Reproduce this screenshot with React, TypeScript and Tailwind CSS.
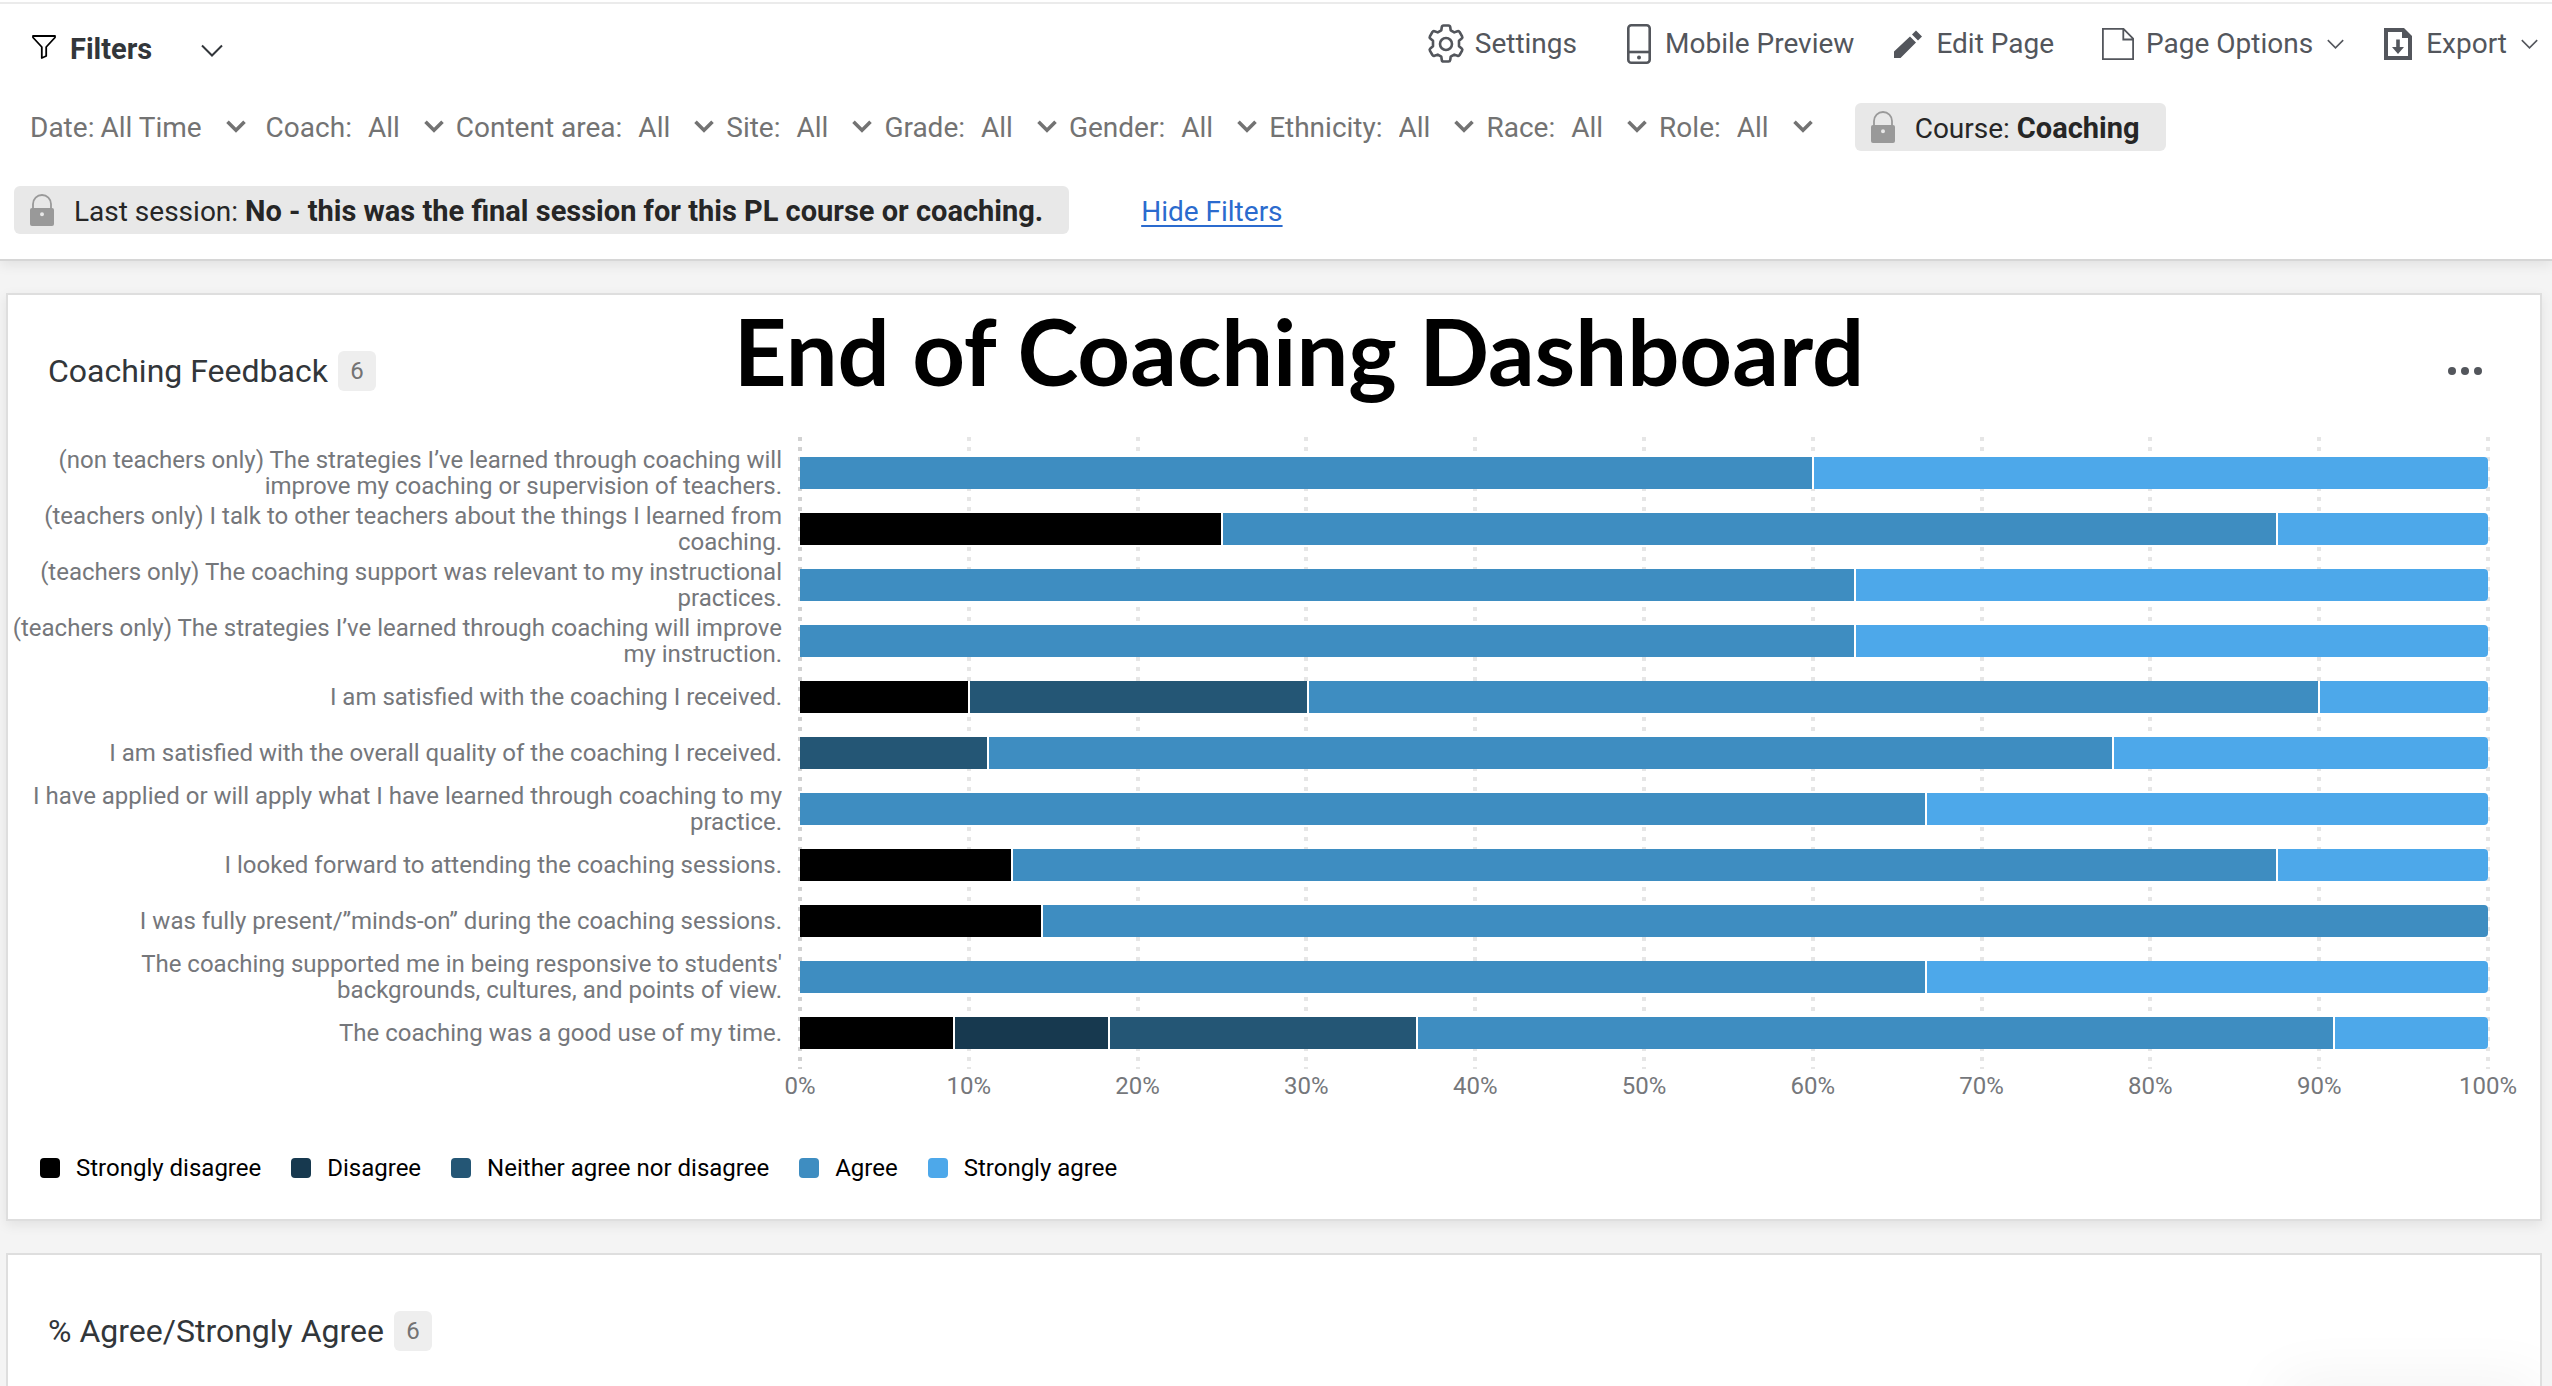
import type { ReactNode } from "react";

const LEVELS = [
  { name: "Strongly disagree", color: "bg-black" },
  { name: "Disagree", color: "bg-[#17394f]" },
  { name: "Neither agree nor disagree", color: "bg-[#245675]" },
  { name: "Agree", color: "bg-[#3e8dc1]" },
  { name: "Strongly agree", color: "bg-[#4da8ea]" },
];

// Shares per row, in the order of LEVELS.
const ROWS: { label: string; values: number[] }[] = [
  {
    label: "(non teachers only) The strategies I’ve learned through coaching will\nimprove my coaching or supervision of teachers.",
    values: [0, 0, 0, 60, 40],
  },
  {
    label: "(teachers only) I talk to other teachers about the things I learned from\ncoaching.",
    values: [25, 0, 0, 62.5, 12.5],
  },
  {
    label: "(teachers only) The coaching support was relevant to my instructional\npractices.",
    values: [0, 0, 0, 62.5, 37.5],
  },
  {
    label: "(teachers only) The strategies I’ve learned through coaching will improve\nmy instruction.",
    values: [0, 0, 0, 62.5, 37.5],
  },
  { label: "I am satisfied with the coaching I received.", values: [10, 0, 20, 60, 10] },
  {
    label: "I am satisfied with the overall quality of the coaching I received.",
    values: [0, 0, 11.1, 66.7, 22.2],
  },
  {
    label: "I have applied or will apply what I have learned through coaching to my\npractice.",
    values: [0, 0, 0, 66.7, 33.3],
  },
  { label: "I looked forward to attending the coaching sessions.", values: [12.5, 0, 0, 75, 12.5] },
  { label: "I was fully present/”minds-on” during the coaching sessions.", values: [14.3, 0, 0, 85.7, 0] },
  {
    label: "The coaching supported me in being responsive to students'\nbackgrounds, cultures, and points of view.",
    values: [0, 0, 0, 66.7, 33.3],
  },
  { label: "The coaching was a good use of my time.", values: [9.1, 9.1, 18.2, 54.5, 9.1] },
];

const TICKS = [0, 10, 20, 30, 40, 50, 60, 70, 80, 90, 100];

const FILTERS = ["Coach", "Content area", "Site", "Grade", "Gender", "Ethnicity", "Race", "Role"];

function ThinChevron({ className }: { className: string }) {
  return (
    <svg viewBox="0 0 22 13" fill="none" stroke="currentColor" strokeWidth="2" className={className} aria-hidden="true">
      <path d="M1 1.5 11 11.5 21 1.5" />
    </svg>
  );
}

function LockIcon() {
  return (
    <svg viewBox="0 0 24 32" className="h-8 w-6 shrink-0" aria-hidden="true">
      <path d="M3 15v-5a9 9 0 0 1 18 0v5" fill="none" stroke="#999" strokeWidth="1.8" />
      <path
        fillRule="evenodd"
        fill="#999"
        d="M2 14h20a2 2 0 0 1 2 2v14a2 2 0 0 1-2 2H2a2 2 0 0 1-2-2V16a2 2 0 0 1 2-2Zm10 4.200a2 2 0 1 0 0 4 2 2 0 0 0 0-4Z"
      />
    </svg>
  );
}

function FilterSelect({ label, value, className = "", gap = "gap-4" }: { label: string; value: string; className?: string; gap?: string }) {
  const id = "filter-" + label.toLowerCase().replace(" ", "-");
  return (
    <div className={`flex items-center pt-[2px] text-[28px] leading-8 text-[#737373] ${gap} ${className}`}>
      <label htmlFor={id}>{label}:</label>
      <div className="relative flex items-center">
        <select id={id} defaultValue={value} className="field-sizing-content appearance-none bg-transparent pr-11 leading-8">
          <option>{value}</option>
        </select>
        <svg
          viewBox="0 0 20 14"
          fill="none"
          stroke="currentColor"
          strokeWidth="3.6"
          className="pointer-events-none absolute right-0 bottom-[10px] h-[14px] w-5"
          aria-hidden="true"
        >
          <path d="M1.500 1.800 10 10.300l8.500-8.500" />
        </svg>
      </div>
    </div>
  );
}

function LockedFilter({ label, value, className = "" }: { label: string; value: string; className?: string }) {
  return (
    <div className={`flex h-12 items-center gap-5 rounded-md bg-[#e8e8e8] pr-[26px] pl-4 text-[28px] leading-8 text-[#262626] ${className}`}>
      <LockIcon />
      <span className="pt-[3px] whitespace-nowrap">
        {label}: <b className="text-[29px] font-bold">{value}</b>
      </span>
    </div>
  );
}

function ToolButton({ icon, children, className = "", menu = false }: { icon: ReactNode; children: ReactNode; className?: string; menu?: boolean }) {
  return (
    <button type="button" className={`flex items-center text-[28px] leading-8 whitespace-nowrap text-[#53565c] ${className}`}>
      {icon}
      {children}
      {menu && <ThinChevron className="ml-[14px] h-[10px] w-[17px]" />}
    </button>
  );
}

function CardTitle({ title, count }: { title: string; count: number }) {
  return (
    <div className="flex items-center gap-[10px]">
      <h2 className="text-[32px] leading-10 text-[#32363a]">{title}</h2>
      <span className="flex h-10 w-[38px] items-center justify-center rounded-md bg-[#eee] text-2xl text-[#737373]">{count}</span>
    </div>
  );
}

function Bar({ values }: { values: number[] }) {
  const segments = values.map((value, i) => ({ value, color: LEVELS[i].color })).filter((s) => s.value > 0);
  return (
    <div className="flex h-8 w-full gap-[2px] overflow-hidden rounded-r-[4px] bg-white">
      {segments.map((s) => (
        <div key={s.color} className={`h-full basis-0 ${s.color}`} style={{ flexGrow: s.value }} />
      ))}
    </div>
  );
}

function Chart() {
  return (
    <div className="flex pr-[52px]">
      <div className="flex w-[774px] shrink-0 flex-col pt-2">
        {ROWS.map((row) => (
          <div key={row.label} className="flex h-14 items-center justify-end text-right text-2xl leading-[26px] whitespace-pre text-[#75777b]">
            {row.label}
          </div>
        ))}
      </div>
      <div className="ml-[18px] min-w-0 flex-1">
        <div className="relative py-2">
          {/* Dotted grid lines behind the bars */}
          <div className="absolute inset-0 -mx-[2px] flex justify-between">
            {TICKS.map((t) => (
              <div
                key={t}
                className={
                  t === 0
                    ? "w-1 bg-[repeating-linear-gradient(to_bottom,#d2d2d2_0_4px,transparent_4px_10px)]"
                    : "w-1 bg-[repeating-linear-gradient(to_bottom,#e6e6e6_0_4px,transparent_4px_10px)]"
                }
              />
            ))}
          </div>
          <div className="relative flex flex-col">
            {ROWS.map((row) => (
              <div key={row.label} className="flex h-14 items-center">
                <Bar values={row.values} />
              </div>
            ))}
          </div>
        </div>
        <div className="flex justify-between text-2xl leading-[34px] text-[#75777b]">
          {TICKS.map((t) => (
            <div key={t} className="flex w-0 justify-center">
              <span>{t}%</span>
            </div>
          ))}
        </div>
      </div>
    </div>
  );
}

const gear = (
  <svg viewBox="0 0 38 40" fill="none" stroke="currentColor" strokeWidth="2.600" strokeLinejoin="round" className="mr-[10px] h-10 w-[38px]" aria-hidden="true">
    <path d="M16.500 1.500h5q1.500 0 1.700 1.500l.5 3.300 3.600 2.100 3.200-1.200q1.400-.5 2.100.8l2.500 4.300q.7 1.300-.4 2.200l-2.700 2.300v5.400l2.700 2.300q1.100.9.4 2.200l-2.500 4.300q-.7 1.300-2.100.8l-3.200-1.200-3.600 2.100-.5 3.300q-.2 1.500-1.700 1.500h-5q-1.500 0-1.700-1.500l-.5-3.300-3.600-2.100-3.200 1.200q-1.400.5-2.100-.8l-2.500-4.300q-.7-1.300.4-2.200l2.700-2.300v-5.400l-2.700-2.300q-1.100-.9-.4-2.200l2.500-4.300q.7-1.300 2.100-.8l3.200 1.200 3.600-2.100.5-3.300q.2-1.500 1.700-1.500Z" />
    <circle cx="19" cy="20" r="6" />
  </svg>
);

const phone = (
  <svg viewBox="0 0 24 40" fill="none" stroke="currentColor" strokeWidth="2.600" className="mr-[14px] h-10 w-6" aria-hidden="true">
    <rect x="1.300" y="1.300" width="21.400" height="37.400" rx="3" />
    <path d="M1.300 28h21.400" />
    <circle cx="12" cy="33.500" r="2" fill="currentColor" stroke="none" />
  </svg>
);

const pencil = (
  <svg viewBox="0 0 28 28" fill="currentColor" className="mr-[14px] size-7" aria-hidden="true">
    <path d="M0 28v-6.500L16 6.500l6 6L6.500 28ZM18 4.500 22 .5l6 6-4 4Z" />
  </svg>
);

const page = (
  <svg viewBox="0 0 32 32" fill="none" stroke="currentColor" strokeWidth="1.800" className="mr-3 size-8" aria-hidden="true">
    <path d="M.9.9H21.500L31.100 10.500V31.100H.9ZM21.300.9V11.500H31.100" />
  </svg>
);

const exportFile = (
  <svg viewBox="0 0 28 32" className="mr-[14px] h-8 w-7" aria-hidden="true">
    <path
      fill="currentColor"
      fillRule="evenodd"
      d="M0 0h20l8 8v24H0ZM4 4v24h20V10h-6V4ZM12.200 11.500h3.600V19h4.200l-6 7-6-7h4.200Z"
    />
  </svg>
);

export default function App() {
  return (
    <div className="flex min-h-screen flex-col overflow-hidden bg-[#f4f4f4] font-[Roboto,sans-serif]">
      <header className="border-b-2 border-[#d6d6d6] bg-white pt-[2px] shadow-[0_4px_12px_rgba(0,0,0,0.08)]">
        <div className="flex h-[86px] items-center justify-between border-t-2 border-[#ebebeb] pr-[14px] pl-8">
          <button type="button" aria-expanded="true" className="flex items-center pt-[5px] text-[29px] leading-8 font-bold text-[#32363a]">
            <svg viewBox="0 0 24 24" fill="none" stroke="#000" strokeWidth="1.800" strokeLinejoin="round" className="mr-[14px] mb-1 size-6" aria-hidden="true">
              <path d="M1 1h22v1.500L14.200 12v9l-4.400 2V12L1 2.500Z" />
            </svg>
            Filters
            <ThinChevron className="mt-1 ml-[49px] h-[13px] w-[22px]" />
          </button>
          <nav className="flex items-center pb-1" aria-label="Page actions">
            <ToolButton icon={gear} className="mr-[50px]">Settings</ToolButton>
            <ToolButton icon={phone} className="mr-10">Mobile Preview</ToolButton>
            <ToolButton icon={pencil} className="mr-12">Edit Page</ToolButton>
            <ToolButton icon={page} className="mr-10" menu>Page Options</ToolButton>
            <ToolButton icon={exportFile} menu>Export</ToolButton>
          </nav>
        </div>
        <div className="flex flex-wrap items-center gap-x-3 gap-y-[35px] pt-[15px] pb-[25px] pl-[14px]">
          <FilterSelect label="Date" value="All Time" gap="gap-[6px]" className="mr-2 ml-4" />
          {FILTERS.map((name) => (
            <FilterSelect key={name} label={name} value="All" />
          ))}
          <LockedFilter label="Course" value="Coaching" className="ml-[30px]" />
          <LockedFilter label="Last session" value="No - this was the final session for this PL course or coaching." />
          <a href="#filters" className="ml-15 pt-1 text-[28px] leading-8 text-[#2b6bce] underline decoration-2 underline-offset-4">
            Hide Filters
          </a>
        </div>
      </header>

      <main className="flex flex-1 flex-col gap-8 pt-8 pr-[10px] pl-[6px]">
        <section className="relative border-2 border-[#dedede] bg-white pb-[35px] shadow-[0_4px_12px_rgba(0,0,0,0.08)]">
          <div className="flex items-center justify-between pt-14 pr-[58px] pl-10">
            <CardTitle title="Coaching Feedback" count={6} />
            <button type="button" aria-label="More options" className="text-[#53565c]">
              <svg viewBox="0 0 34 8" fill="currentColor" className="h-2 w-[34px]">
                <circle cx="4" cy="4" r="4" />
                <circle cx="17" cy="4" r="4" />
                <circle cx="30" cy="4" r="4" />
              </svg>
            </button>
          </div>
          <h1 className="absolute inset-x-0 top-0 pl-[50px] text-center font-[Lato,sans-serif] text-[92px] leading-[112px] font-bold text-black">
            End of Coaching Dashboard
          </h1>
          <div className="pt-[46px]">
            <Chart />
          </div>
          <ul className="flex flex-wrap gap-x-[30px] pt-[49px] pl-8">
            {LEVELS.map((level) => (
              <li key={level.name} className="flex items-center gap-4 text-2xl leading-8 text-black">
                <span className={`size-5 rounded-[4px] ${level.color}`} />
                {level.name}
              </li>
            ))}
          </ul>
        </section>
        <section className="relative flex-1 overflow-hidden border-2 border-b-0 border-[#dedede] bg-white pt-14 pl-10">
          <CardTitle title="% Agree/Strongly Agree" count={6} />
          <div className="pointer-events-none absolute right-0 -bottom-8 h-8 w-[260px] shadow-[0_0_60px_rgba(0,0,0,0.08)]" />
        </section>
      </main>
    </div>
  );
}
